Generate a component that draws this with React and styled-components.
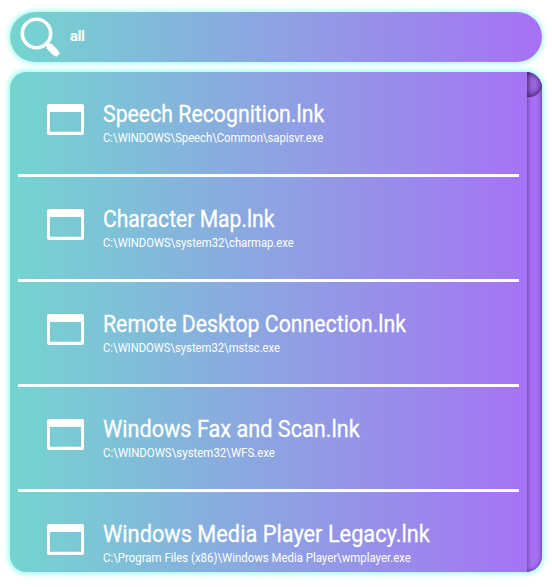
import React, { useLayoutEffect, useRef, useState } from 'react';
import styled, { createGlobalStyle } from 'styled-components';

const GlobalStyle = createGlobalStyle`
  * { box-sizing: border-box; }
  body {
    margin: 0;
    background: #fff;
    color: #fff;
    font-family: Roboto, "Noto Sans", sans-serif;
    overflow: hidden;
  }
`;

const Launcher = styled.main`
  display: flex;
  flex-direction: column;
  gap: 10px;
  width: 552px;
  height: 587px;
  padding: 12px 10px 15px;
`;

const Surface = styled.div`
  background: linear-gradient(90deg, #74d5d0 0%, #a770f5 100%);
  box-shadow: 0 0 5px 1.5px #a0fff0;
`;

const SearchBar = styled(Surface)`
  display: flex;
  align-items: center;
  height: 50px;
  padding-left: 10px;
  border-radius: 25px;
`;

const SearchIcon = styled.svg`
  width: 40px;
  height: 40px;
  flex: none;
`;

const Query = styled.span`
  margin: -1px 0 0 10px;
  font-size: 14.5px;
  font-weight: 700;
  line-height: 20px;
  letter-spacing: -0.3px;
`;

const ResultsPanel = styled(Surface)`
  display: flex;
  height: 500px;
  border-radius: 16px;
  overflow: hidden;
`;

const Results = styled.ul`
  flex: 1;
  min-width: 0;
  margin: 0;
  padding: 0 8px;
  list-style: none;
`;

const Result = styled.li`
  display: flex;
  height: 105px;
  padding: 28px 0 0 28px;
  border-bottom: 3px solid #fff;
`;

const WindowIcon = styled.svg`
  width: 39px;
  height: 33px;
  margin-top: 3px;
  flex: none;
`;

const Details = styled.div`
  display: flex;
  flex-direction: column;
  align-items: flex-start;
  margin-left: 18px;
`;

const Label = styled.span`
  display: block;
  white-space: nowrap;
  transform-origin: left center;
`;

const Title = styled(Label)`
  font-size: 24.5px;
  line-height: 28px;
  -webkit-text-stroke: 0.3px #fff;
`;

const Path = styled(Label)`
  margin-top: 2px;
  font-size: 12.5px;
  line-height: 16px;
`;

const Scrollbar = styled.div`
  width: 15px;
  flex: none;
  border-radius: 0 16px 16px 0;
  background: #a671f4;
  box-shadow: inset 0 0 5px rgba(40, 10, 70, 0.65);
`;

const Thumb = styled.div`
  height: 25px;
  border-radius: 0 15px 15px 0;
  background: #a06be8;
  box-shadow: inset 0 0 7px rgba(20, 0, 40, 0.95);
`;

const results = [
  { title: 'Speech Recognition.lnk', titleWidth: 221.5, path: 'C:\\WINDOWS\\Speech\\Common\\sapisvr.exe', pathWidth: 220.5 },
  { title: 'Character Map.lnk', titleWidth: 171.5, path: 'C:\\WINDOWS\\system32\\charmap.exe', pathWidth: 191 },
  { title: 'Remote Desktop Connection.lnk', titleWidth: 303, path: 'C:\\WINDOWS\\system32\\mstsc.exe', pathWidth: 177 },
  { title: 'Windows Fax and Scan.lnk', titleWidth: 256.5, path: 'C:\\WINDOWS\\system32\\WFS.exe', pathWidth: 172 },
  { title: 'Windows Media Player Legacy.lnk', titleWidth: 327, path: 'C:\\Program Files (x86)\\Windows Media Player\\wmplayer.exe', pathWidth: 307.5 },
];

function FittedLabel({ as: Text, width, children }) {
  const ref = useRef(null);
  const [scale, setScale] = useState(1);
  useLayoutEffect(() => {
    setScale(width / ref.current.offsetWidth);
  }, [width, children]);
  return <Text ref={ref} style={{ transform: `scaleX(${scale})` }}>{children}</Text>;
}

export default function App() {
  return (
    <>
      <GlobalStyle />
      <Launcher>
        <SearchBar>
          <SearchIcon viewBox="0 0 40 40" fill="none" stroke="#fff">
            <circle cx="16.5" cy="16.5" r="14.2" strokeWidth="3.6" />
            <path d="M25.5 25.5l4 4" strokeWidth="4.5" />
            <path d="M28.6 28.6l7.6 7.6" strokeWidth="7" />
            <path d="M35.2 35.2l1 1" strokeWidth="5.4" strokeLinecap="square" strokeLinejoin="round" />
          </SearchIcon>
          <Query>all</Query>
        </SearchBar>
        <ResultsPanel>
          <Results>
            {results.map((item) => (
              <Result key={item.title}>
                <WindowIcon viewBox="0 0 39 33">
                  <path
                    fill="#fff"
                    fillRule="evenodd"
                    d="M3 1h33a2 2 0 0 1 2 2v27a2 2 0 0 1-2 2H3a2 2 0 0 1-2-2V3a2 2 0 0 1 2-2zM3.9 9v19.7h31.2V9z"
                  />
                </WindowIcon>
                <Details>
                  <FittedLabel as={Title} width={item.titleWidth}>{item.title}</FittedLabel>
                  <FittedLabel as={Path} width={item.pathWidth}>{item.path}</FittedLabel>
                </Details>
              </Result>
            ))}
          </Results>
          <Scrollbar>
            <Thumb />
          </Scrollbar>
        </ResultsPanel>
      </Launcher>
    </>
  );
}
